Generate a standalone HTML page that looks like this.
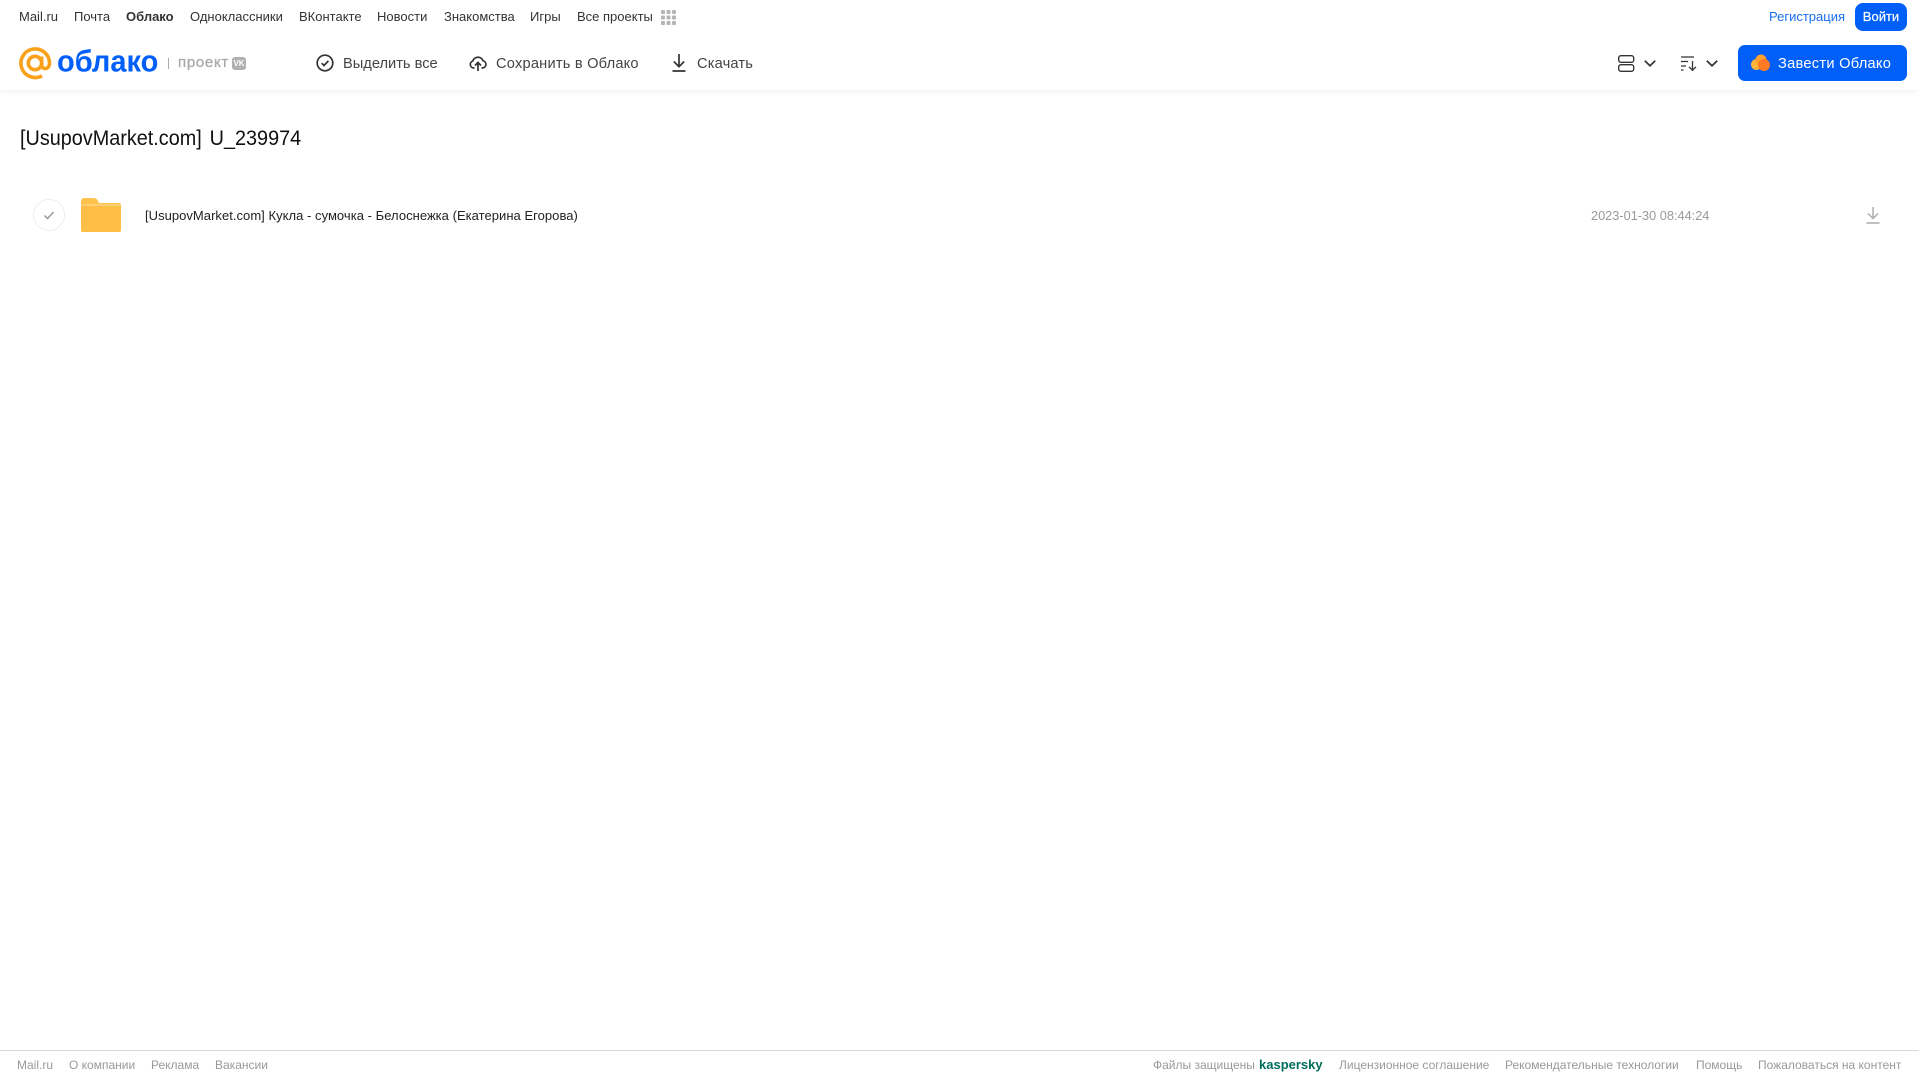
<!DOCTYPE html>
<html lang="ru"><head><meta charset="utf-8"><title>Облако</title>
<style>
html,body{margin:0;padding:0;background:#fff;width:1919px;height:1079px;overflow:hidden;font-family:"Liberation Sans",sans-serif}
.t{position:absolute;white-space:nowrap;line-height:20px;height:20px}
.n{top:7px;font-size:13px;color:#333}
.a{top:53.500px;font-size:14.650px;color:#444}
.f{top:1055px;font-size:12px;color:#999}
svg{position:absolute;overflow:visible}
#hd{position:absolute;left:0;top:0;width:1919px;height:90px;background:#fff;box-shadow:0 1px 6px rgba(0,0,0,.07)}
</style></head><body>
<div id="hd"></div>
<div class="t n" style="left:19px">Mail.ru</div>
<div class="t n" style="left:74px">Почта</div>
<div class="t n" style="left:126px;font-weight:bold">Облако</div>
<div class="t n" style="left:190px">Одноклассники</div>
<div class="t n" style="left:299px">ВКонтакте</div>
<div class="t n" style="left:377px">Новости</div>
<div class="t n" style="left:444px">Знакомства</div>
<div class="t n" style="left:530px">Игры</div>
<div class="t n" style="left:577px">Все проекты</div>
<svg style="left:661px;top:10px" width="15" height="15" fill="#b5b5b5"><rect x="0" y="0" width="4" height="4" rx="1"/><rect x="5.500" y="0" width="4" height="4" rx="1"/><rect x="11" y="0" width="4" height="4" rx="1"/><rect x="0" y="5.500" width="4" height="4" rx="1"/><rect x="5.500" y="5.500" width="4" height="4" rx="1"/><rect x="11" y="5.500" width="4" height="4" rx="1"/><rect x="0" y="11" width="4" height="4" rx="1"/><rect x="5.500" y="11" width="4" height="4" rx="1"/><rect x="11" y="11" width="4" height="4" rx="1"/></svg>

<svg style="left:19px;top:47px" width="33" height="33" viewBox="0 0 33 33" fill="none" stroke="#f9a11b" stroke-width="3.600"><circle cx="16" cy="16" r="6.700"/><path d="M22.700 9.500V18c0 5 7.800 5 7.800-2A14.300 14.300 0 1 0 23 28.800"/></svg>
<div class="t" style="left:57px;top:46px;height:32px;line-height:32px;font-size:29px;font-weight:bold;color:#005ff9;transform:scaleY(1.06);transform-origin:0 60%">облако</div>
<div style="position:absolute;left:168px;top:58px;width:1px;height:11px;background:#aaa"></div>
<div class="t" style="left:178px;top:53px;font-size:15px;color:#a8a8a8;letter-spacing:.7px;-webkit-text-stroke:.3px #a8a8a8">проект</div>
<div class="t" style="left:232px;top:57px;width:14px;height:13px;line-height:13px;border-radius:3px;background:#b0b0b0;color:#fff;font-size:8px;font-weight:bold;text-align:center">VK</div>

<svg style="left:316px;top:54px" width="18" height="18" viewBox="0 0 18 18" fill="none" stroke="#333" stroke-width="1.700"><circle cx="9" cy="9" r="7.800"/><path d="M5.700 9.200l2.300 2.300 4.400-4.600"/></svg>
<div class="t a" style="left:343px">Выделить все</div>
<svg style="left:469px;top:54px" width="18" height="18" viewBox="0 0 18 18" fill="none" stroke="#333" stroke-width="1.700"><path d="M5.500 14H4.500A3.600 3.600 0 0 1 3.800 7 5.400 5.400 0 0 1 14 6.700 3.700 3.700 0 0 1 13.500 14H12.500"/><path d="M9 17V9M6 11.500l3-3 3 3"/></svg>
<div class="t a" style="left:496px;letter-spacing:.2px">Сохранить в Облако</div>
<svg style="left:672px;top:54px" width="14" height="18" viewBox="0 0 14 18" fill="none" stroke="#333" stroke-width="1.700"><path d="M7 0v12.500M1.800 7.500L7 12.700l5.200-5.200M.5 17h13"/></svg>
<div class="t a" style="left:697px;letter-spacing:.17px">Скачать</div>

<svg style="left:1618px;top:55px" width="17" height="17" viewBox="0 0 17 17" fill="none" stroke="#333" stroke-width="1.400"><rect x=".7" y=".7" width="15" height="6.600" rx="2.200"/><rect x=".7" y="9.700" width="15" height="6.600" rx="2.200"/></svg>
<svg style="left:1644px;top:60px" width="12" height="7" fill="none" stroke="#333" stroke-width="1.700"><path d="M.8.800L6 5.800 11.200.800"/></svg>
<svg style="left:1681px;top:56px" width="16" height="15" viewBox="0 0 16 15" fill="none" stroke="#333" stroke-width="1.300"><path d="M0 1h13M0 5.500h7M0 10h5M0 14h2.500M11.500 5v9M8 10.800l3.500 3.500 3.500-3.500"/></svg>
<svg style="left:1706px;top:60px" width="12" height="7" fill="none" stroke="#333" stroke-width="1.700"><path d="M.8.800L6 5.800 11.200.800"/></svg>

<div class="t n" style="left:1769px;color:#1a6ff0">Регистрация</div>
<div class="t" style="left:1855px;top:3px;width:52px;height:28px;line-height:28px;background:#005ff9;border-radius:8px;color:#fff;font-size:13px;text-align:center;-webkit-text-stroke:.2px #fff">Войти</div>
<div style="position:absolute;left:1738px;top:45px;width:169px;height:36px;background:#005ff9;border-radius:7px"></div>
<svg style="left:1751px;top:54px" width="19" height="17" viewBox="0 0 19 17"><circle cx="5.500" cy="10.500" r="5.500" fill="#ffb43a"/><circle cx="10" cy="6" r="5.500" fill="#ffa230"/><circle cx="13" cy="11" r="6" fill="#ff7a22"/></svg>
<div class="t a" style="left:1778px;color:#fff;letter-spacing:.26px">Завести Облако</div>

<div class="t" style="left:20px;top:124px;height:28px;line-height:28px;font-size:21.500px;color:#111;word-spacing:2.600px;transform:scaleX(.922);transform-origin:0 50%">[UsupovMarket.com] U_239974</div>

<svg style="left:33px;top:199px" width="32" height="32" viewBox="0 0 32 32" fill="none"><circle cx="16" cy="16" r="15.500" stroke="#eee"/><path d="M11.500 16.500l3 3 6-6.500" stroke="#999" stroke-width="1.500"/></svg>
<svg style="left:81px;top:197px" width="40" height="36" viewBox="0 0 40 36"><path d="M0 4a3 3 0 0 1 3-3h9c3 0 4 1 5 3l1 2h20a2 2 0 0 1 2 2v25a2 2 0 0 1-2 2H2a2 2 0 0 1-2-2z" fill="#ffc24d"/><path d="M0 9h40V33a2 2 0 0 1-2 2H2a2 2 0 0 1-2-2z" fill="#ffbf47"/><rect y="7" width="40" height="2" fill="#ffd071"/></svg>
<div class="t" style="left:145px;top:206px;font-size:13px;color:#222;letter-spacing:.035px">[UsupovMarket.com] Кукла - сумочка - Белоснежка (Екатерина Егорова)</div>
<div class="t" style="left:1591px;top:206px;font-size:12.750px;color:#999">2023-01-30 08:44:24</div>
<svg style="left:1866px;top:207px" width="14" height="17" viewBox="0 0 14 17" fill="none" stroke="#aaa" stroke-width="1.400"><path d="M7 0v11.500M2 6.500l5 5 5-5M.5 16h13"/></svg>

<div style="position:absolute;left:0;top:1050px;width:1919px;height:1px;background:#d9d9d9"></div>
<div class="t f" style="left:17px">Mail.ru</div>
<div class="t f" style="left:69px">О компании</div>
<div class="t f" style="left:151px">Реклама</div>
<div class="t f" style="left:215px">Вакансии</div>
<div class="t f" style="left:1153px">Файлы защищены</div>
<div class="t f" style="left:1259px;font-weight:bold;font-size:13px;color:#006d5c">kaspersky</div>
<div class="t f" style="left:1339px">Лицензионное соглашение</div>
<div class="t f" style="left:1505px">Рекомендательные технологии</div>
<div class="t f" style="left:1696px">Помощь</div>
<div class="t f" style="left:1758px">Пожаловаться на контент</div>
</body></html>
